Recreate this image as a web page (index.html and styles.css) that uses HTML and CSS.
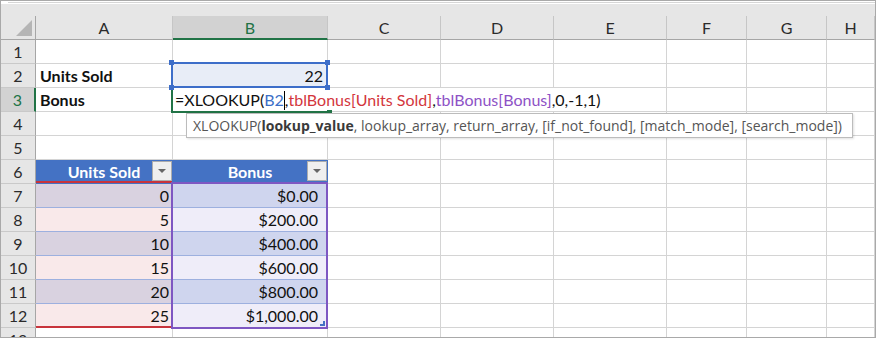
FILE: index.html
```html
<!DOCTYPE html>
<html lang="en">
<head>
    <meta charset="UTF-8">
    <title>XLOOKUP bonus sheet</title>
    <link rel="stylesheet" href="styles.css">
</head>
<body>
    <div class="sheet">
        <div class="topbar"></div>
        <div class="band"></div>
        <div class="grid">
            <!-- column headers -->
            <div class="corner">
                <svg width="17" height="16" viewBox="0 0 17 16"><polygon points="16,0 16,16 0,16" fill="#b5b5b5"/></svg>
            </div>
            <div class="ch">A</div>
            <div class="ch sel">B</div>
            <div class="ch">C</div>
            <div class="ch">D</div>
            <div class="ch">E</div>
            <div class="ch">F</div>
            <div class="ch">G</div>
            <div class="ch">H</div>

            <div class="rh">1</div>
            <div class="c"></div><div class="c"></div><div class="c"></div><div class="c"></div><div class="c"></div><div class="c"></div><div class="c"></div><div class="c"></div>

            <div class="rh">2</div>
            <div class="c b">Units Sold</div>
            <div class="c num picked">22</div>
            <div class="c"></div><div class="c"></div><div class="c"></div><div class="c"></div><div class="c"></div><div class="c"></div>

            <div class="rh sel">3</div>
            <div class="c b">Bonus</div>
            <div class="c spill"><span>=XLOOKUP(</span><span class="ref-b">B2</span><span class="caret"></span><span>,</span><span class="ref-r">tblBonus[Units Sold]</span><span>,</span><span class="ref-p">tblBonus[Bonus]</span><span>,0,-1,1)</span></div>
            <div class="c open"></div><div class="c open"></div><div class="c"></div><div class="c"></div><div class="c"></div><div class="c"></div>

            <div class="rh">4</div>
            <div class="c"></div><div class="c"></div><div class="c"></div><div class="c"></div><div class="c"></div><div class="c"></div><div class="c"></div><div class="c"></div>

            <div class="rh">5</div>
            <div class="c"></div><div class="c"></div><div class="c"></div><div class="c"></div><div class="c"></div><div class="c"></div><div class="c"></div><div class="c"></div>

            <div class="rh">6</div>
            <div class="c th">Units Sold<span class="filter"></span></div>
            <div class="c th">Bonus<span class="filter"></span></div>
            <div class="c"></div><div class="c"></div><div class="c"></div><div class="c"></div><div class="c"></div><div class="c"></div>
        </div>
        <div class="grid" id="rows"></div>

        <!-- overlays: selections and the function tip -->
        <div class="pick-box">
            <i class="h tl"></i><i class="h tr"></i><i class="h bl"></i><i class="h br"></i>
        </div>
        <div class="active-box"><i class="fill"></i></div>
        <div class="range-red"></div>
        <div class="range-purple"><i class="resize"></i></div>
        <div class="tip">XLOOKUP(<b>lookup_value</b>, lookup_array, return_array, [if_not_found], [match_mode], [search_mode])</div>
    </div>

    <script>
        const bonus = [[0, '$0.00'], [5, '$200.00'], [10, '$400.00'], [15, '$600.00'], [20, '$800.00'], [25, '$1,000.00']];
        const rows = document.getElementById('rows');
        const blanks = n => '<div class="c"></div>'.repeat(n);

        rows.innerHTML = bonus.map(([units, pay], i) => `
            <div class="rh">${i + 7}</div>
            <div class="c num tb ${i % 2 ? 'a-even' : 'a-odd'}">${units}</div>
            <div class="c num tb money ${i % 2 ? 'b-even' : 'b-odd'}">${pay}</div>
            ${blanks(6)}
        `).join('') + `<div class="rh">13</div>${blanks(8)}`;
    </script>
</body>
</html>
```

FILE: styles.css
```css
:root {
    --grid: #d4d4d4;
    --head: #e6e6e6;
    --head-sel: #d2d2d2;
    --green: #217346;
    --blue: #4472c4;
    --pick: #3d6ec9;
    --red: #c8343c;
    --purple: #7e57c2;
    --band: #9db0df;
}

* {
    box-sizing: border-box;
    margin: 0;
    padding: 0;
}

body {
    background: #fff;
}

.sheet {
    position: relative;
    width: 876px;
    height: 338px;
    border: 1px solid #a9a9a9;
    overflow: hidden;
    background: #fff;
    font-family: Lato, 'Liberation Sans', sans-serif;
    font-size: 16px;
    color: #111;
}

.topbar {
    height: 3px;
    position: relative;
}

.topbar::after {
    content: '';
    position: absolute;
    left: 7px;
    right: 0;
    top: 1px;
    border-top: 1px solid #d6d6d6;
}

.band {
    height: 12px;
    background: var(--head);
}

.grid {
    display: grid;
    grid-template-columns: 35px 137px 155px 113px 113px 113px 80px 80px 1fr;
    grid-auto-rows: 24px;
}

.corner {
    background: var(--head);
    border-right: 1px solid #a6a6a6;
    border-bottom: 1px solid #a6a6a6;
    display: flex;
    align-items: flex-end;
    justify-content: flex-end;
    padding: 0 2px 3px 0;
}

.ch {
    background: var(--head);
    border-right: 1px solid #c6c6c6;
    border-bottom: 1px solid #a6a6a6;
    text-align: center;
    line-height: 23px;
    color: #2b2b2b;
}

.ch.sel {
    background: var(--head-sel);
    color: var(--green);
    border-bottom: 2px solid var(--green);
}

.rh {
    background: var(--head);
    border-right: 1px solid #a6a6a6;
    border-bottom: 1px solid #c9c9c9;
    text-align: center;
    line-height: 23px;
    color: #2b2b2b;
}

.rh.sel {
    background: var(--head-sel);
    color: var(--green);
    border-right: 2px solid var(--green);
}

.c {
    border-right: 1px solid var(--grid);
    border-bottom: 1px solid var(--grid);
    line-height: 23px;
    padding: 0 4px;
    white-space: nowrap;
    position: relative;
}

.b {
    font-weight: 700;
}

.num {
    text-align: right;
}

.picked {
    background: #e8edf7;
}

.spill {
    border-right: none;
    overflow: visible;
    padding-left: 2px;
    z-index: 2;
}

.open {
    border-right: none;
}

.ref-b { color: #3b6fc8; }
.ref-r { color: #d3363d; }
.ref-p { color: #8e52c6; }

.caret {
    display: inline-block;
    width: 1px;
    height: 19px;
    background: #000;
    vertical-align: -4px;
}

/* table header */
.th {
    background: var(--blue);
    color: #fff;
    font-weight: 700;
    text-align: center;
    border-right-color: var(--blue);
    border-bottom-color: var(--blue);
}

.filter {
    position: absolute;
    right: 0;
    top: 1px;
    width: 20px;
    height: 20px;
    background: #efefef;
    border: 1px solid #adadad;
}

.filter::after {
    content: '';
    position: absolute;
    left: 5px;
    top: 7px;
    border-left: 4px solid transparent;
    border-right: 4px solid transparent;
    border-top: 4px solid #666;
}

/* table body */
.tb {
    border-bottom-color: var(--band);
    padding-right: 3px;
}

.money {
    padding-right: 9px;
}

.a-odd { background: #d9d2e0; }
.a-even { background: #f9e9ea; }
.b-odd { background: #cfd5ee; }
.b-even { background: #efedf9; }

/* selection overlays */
.pick-box {
    position: absolute;
    left: 170px;
    top: 61px;
    width: 157px;
    height: 26px;
    border: 2px solid var(--pick);
    z-index: 3;
}

.h {
    position: absolute;
    width: 5px;
    height: 5px;
    background: var(--pick);
}

.h.tl { left: -4px; top: -4px; }
.h.tr { right: -4px; top: -4px; }
.h.bl { left: -4px; bottom: -4px; }
.h.br { right: -4px; bottom: -4px; }

.active-box {
    position: absolute;
    left: 170px;
    top: 86px;
    width: 157px;
    height: 26px;
    border-left: 2px solid var(--green);
    border-bottom: 2px solid var(--green);
    z-index: 2;
}

.fill {
    position: absolute;
    right: -4px;
    bottom: -3px;
    width: 5px;
    height: 4px;
    background: var(--green);
}

.range-red {
    position: absolute;
    left: 35px;
    top: 180px;
    width: 136px;
    height: 147px;
    border-top: 2px solid var(--red);
    border-bottom: 2px solid var(--red);
}

.range-purple {
    position: absolute;
    left: 170px;
    top: 181px;
    width: 157px;
    height: 147px;
    border: 2px solid var(--purple);
}

.resize {
    position: absolute;
    right: 1px;
    bottom: 1px;
    width: 5px;
    height: 5px;
    border-right: 2px solid var(--blue);
    border-bottom: 2px solid var(--blue);
}

.tip {
    position: absolute;
    left: 185px;
    top: 112px;
    width: 667px;
    height: 25px;
    background: #fff;
    border: 1px solid #bcbcbc;
    box-shadow: 1px 1px 2px rgba(0, 0, 0, 0.12);
    padding-left: 6px;
    font-family: 'Open Sans', 'Noto Sans', sans-serif;
    font-size: 14px;
    line-height: 23px;
    color: #555;
    white-space: nowrap;
    z-index: 4;
}

.tip b {
    color: #3a3a3a;
    font-weight: 700;
}
```
